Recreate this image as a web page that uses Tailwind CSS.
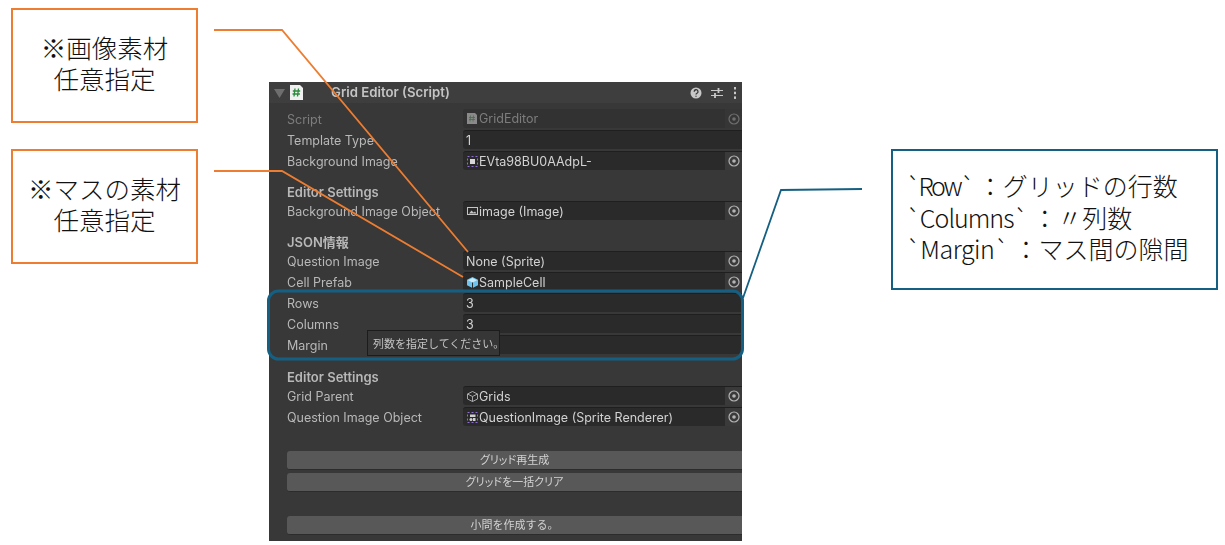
<!DOCTYPE html>
<html lang="ja">
  <head>
    <meta charset="UTF-8" />
    <meta name="viewport" content="width=device-width, initial-scale=1.0" />
    <title>Grid Editor</title>
    <script src="https://cdn.jsdelivr.net/npm/@tailwindcss/browser@4"></script>
  </head>
  <body class="bg-white overflow-hidden">
    <div class="relative w-[1225px] h-[545px] bg-white font-['Noto_Sans_CJK_JP',sans-serif] text-[#111]">

      <!-- Callouts -->
      <div class="absolute left-[11px] top-[8px] w-[187px] h-[115px] border-2 border-[#ed7d31] flex items-center justify-center text-center text-[25.500px] leading-[31px] font-light">
        <p class="mb-[7px]">※画像素材<br />任意指定</p>
      </div>
      <div class="absolute left-[11px] top-[149px] w-[187px] h-[115px] border-2 border-[#ed7d31] flex items-center justify-center text-center text-[25.500px] leading-[31px] font-light">
        <p class="mb-[7px]">※マスの素材<br />任意指定</p>
      </div>
      <div class="absolute left-[891px] top-[149px] w-[327px] h-[141px] border-2 border-[#156082] flex items-center pl-[13px] text-[25px] leading-[31.5px] font-light whitespace-nowrap">
        <p class="mb-[4px]"><span class="tracking-[-2.4px]">`Row`</span>&#8201;：グリッドの行数<br /><span class="tracking-[-1px]">`Columns`</span>&#8201;：〃列数<br /><span class="tracking-[-0.5px]">`Margin`</span>&#8201;：マス間の隙間</p>
      </div>

      <!-- Inspector -->
      <div class="absolute left-[269px] top-[82px] w-[473px] h-[459px] overflow-hidden blur-[0.35px] bg-[#383838] font-['Inter','Noto_Sans_CJK_JP',sans-serif] text-[12.5px] leading-[21px] text-[#b8b8b8]">
        <div class="h-[21px] bg-[#3e3e3e] flex items-center pl-[5px] pr-[4px] text-[13.2px] font-semibold text-[#c4c4c4]">
          <svg class="w-[11px] h-[10px]" viewBox="0 0 11 10"><path d="M0 1h11L5.500 10z" fill="#6e6e6e" /></svg>
          <svg class="w-[13px] h-[15px] ml-[5px]" viewBox="0 0 13 15">
            <path d="M0 0h10l3 3v12H0z" fill="#f0f0f0" />
            <path d="M5 3.500 4 11.500M8.500 3.500l-1 8M2.800 6h7.400M2.500 9h7.400" stroke="#2c8a3c" stroke-width="1.300" fill="none" />
          </svg>
          <span class="ml-[28px] flex-1">Grid Editor (Script)</span>
          <svg class="w-[12px] h-[12px] mr-[9px]" viewBox="0 0 12 12">
            <circle cx="6" cy="6" r="5.500" fill="#c8c8c8" />
            <path d="M4.200 4.700a1.900 1.900 0 1 1 2.800 1.600c-.7.400-1 .7-1 1.300M6 8.700v1.100" stroke="#383838" stroke-width="1.300" fill="none" />
          </svg>
          <svg class="w-[12px] h-[12px] mr-[10px]" viewBox="0 0 12 12">
            <path d="M0 3.500h12M0 8.500h12" stroke="#c8c8c8" stroke-width="1" />
            <path d="M7.500 1v5M4 6v5" stroke="#c8c8c8" stroke-width="1.800" />
          </svg>
          <svg class="w-[4px] h-[12px] mr-[1px]" viewBox="0 0 4 12" fill="#c8c8c8">
            <rect x="1" y="0" width="2" height="2.500" /><rect x="1" y="4.700" width="2" height="2.500" /><rect x="1" y="9.400" width="2" height="2.500" />
          </svg>
        </div>

        <div class="mt-[6px] flex flex-col gap-[2px]">
          <!-- Script -->
          <div class="flex h-[19px] pl-[18px]">
            <span class="w-[176px] text-[#7d7d7d]">Script</span>
            <div class="flex-1 flex items-center rounded-l-[3px] bg-[#323232] text-[#7d7d7d] pl-[4px]">
              <svg class="w-[10px] h-[11px] mr-[2px]" viewBox="0 0 10 11"><path d="M0 0h8l2 2v9H0z" fill="#8a8a8a" /><path d="M3.500 2.500 3 8.500M6.500 2.500 6 8.500M2 4.500h6M2 6.500h6" stroke="#4c6a50" stroke-width=".8" /></svg>
              <span class="flex-1">GridEditor</span>
              <div class="w-[17px] h-full flex items-center justify-center bg-[#363636]">
                <svg class="w-[12px] h-[12px]" viewBox="0 0 12 12"><circle cx="6" cy="6" r="5" fill="none" stroke="#6e6e6e" stroke-width="1.200" /><circle cx="6" cy="6" r="1.800" fill="#6e6e6e" /></svg>
              </div>
            </div>
          </div>
          <!-- Template Type -->
          <div class="flex h-[19px] pl-[18px]">
            <span class="w-[176px]">Template Type</span>
            <div class="flex-1 flex items-center rounded-l-[3px] bg-[#2a2a2a] border-t border-[#1f1f1f] pl-[3px] text-[#d2d2d2]">1</div>
          </div>
          <!-- Background Image -->
          <div class="flex h-[19px] pl-[18px]">
            <span class="w-[176px]">Background Image</span>
            <div class="flex-1 flex items-center rounded-l-[3px] bg-[#2a2a2a] border-t border-[#1f1f1f] pl-[4px] text-[#d2d2d2]">
              <svg class="w-[11px] h-[11px] mr-[1px]" viewBox="0 0 11 11"><rect x=".5" y=".5" width="10" height="10" fill="none" stroke="#8a6fd0" stroke-width="1" stroke-dasharray="2 2" /><rect x="3" y="3" width="5" height="5" fill="#d8d8d8" /></svg>
              <span class="flex-1">EVta98BU0AAdpL-</span>
              <div class="w-[17px] h-full flex items-center justify-center bg-[#3a3a3a]">
                <svg class="w-[12px] h-[12px]" viewBox="0 0 12 12"><circle cx="6" cy="6" r="5" fill="none" stroke="#b4b4b4" stroke-width="1.200" /><circle cx="6" cy="6" r="1.800" fill="#b4b4b4" /></svg>
              </div>
            </div>
          </div>

          <div class="mt-[10px] mb-[-2px] h-[19px] pl-[18px] text-[13px] font-semibold">Editor Settings</div>
          <div class="flex h-[19px] pl-[18px]">
            <span class="w-[176px]">Background Image Object</span>
            <div class="flex-1 flex items-center rounded-l-[3px] bg-[#2a2a2a] border-t border-[#1f1f1f] pl-[4px] text-[#d2d2d2]">
              <svg class="w-[11px] h-[10px] mr-[1px]" viewBox="0 0 11 10"><rect x=".5" y="1.500" width="10" height="7" fill="none" stroke="#c4c4c4" /><path d="M2 7.500 4.500 4.500 6.500 6.500 8 5.500 9.500 7.500z" fill="#c4c4c4" /></svg>
              <span class="flex-1">image (Image)</span>
              <div class="w-[17px] h-full flex items-center justify-center bg-[#3a3a3a]">
                <svg class="w-[12px] h-[12px]" viewBox="0 0 12 12"><circle cx="6" cy="6" r="5" fill="none" stroke="#b4b4b4" stroke-width="1.200" /><circle cx="6" cy="6" r="1.800" fill="#b4b4b4" /></svg>
              </div>
            </div>
          </div>

          <div class="mt-[10px] mb-[-2px] h-[19px] pl-[18px] text-[13px] font-semibold">JSON情報</div>
          <div class="flex h-[19px] pl-[18px]">
            <span class="w-[176px]">Question Image</span>
            <div class="flex-1 flex items-center rounded-l-[3px] bg-[#2a2a2a] border-t border-[#1f1f1f] pl-[3px] text-[#d2d2d2]">
              <span class="flex-1">None (Sprite)</span>
              <div class="w-[17px] h-full flex items-center justify-center bg-[#3a3a3a]">
                <svg class="w-[12px] h-[12px]" viewBox="0 0 12 12"><circle cx="6" cy="6" r="5" fill="none" stroke="#b4b4b4" stroke-width="1.200" /><circle cx="6" cy="6" r="1.800" fill="#b4b4b4" /></svg>
              </div>
            </div>
          </div>
          <div class="flex h-[19px] pl-[18px]">
            <span class="w-[176px]">Cell Prefab</span>
            <div class="flex-1 flex items-center rounded-l-[3px] bg-[#2a2a2a] border-t border-[#1f1f1f] pl-[4px] text-[#d2d2d2]">
              <svg class="w-[11px] h-[11px] mr-[1px]" viewBox="0 0 11 11"><path d="M5.500 0 11 2.700v5.600L5.500 11 0 8.300V2.700z" fill="#6fc4ee" /><path d="M1 3.200 5.500 5.500 10 3.200 5.500 1z" fill="#cdeaf8" /><path d="M5.500 5.500V11" stroke="#2a2a2a" /></svg>
              <span class="flex-1">SampleCell</span>
              <div class="w-[17px] h-full flex items-center justify-center bg-[#3a3a3a]">
                <svg class="w-[12px] h-[12px]" viewBox="0 0 12 12"><circle cx="6" cy="6" r="5" fill="none" stroke="#b4b4b4" stroke-width="1.200" /><circle cx="6" cy="6" r="1.800" fill="#b4b4b4" /></svg>
              </div>
            </div>
          </div>
          <div class="flex h-[19px] pl-[18px]">
            <span class="w-[176px]">Rows</span>
            <div class="flex-1 flex items-center rounded-l-[3px] bg-[#2a2a2a] border-t border-[#1f1f1f] pl-[3px] pt-[1px] text-[#d2d2d2]">3</div>
          </div>
          <div class="flex h-[19px] pl-[18px]">
            <span class="w-[176px]">Columns</span>
            <div class="flex-1 flex items-center rounded-l-[3px] bg-[#2a2a2a] border-t border-[#1f1f1f] pl-[3px] pt-[1px] text-[#d2d2d2]">3</div>
          </div>
          <div class="flex h-[19px] pl-[18px]">
            <span class="w-[176px]">Margin</span>
            <div class="flex-1 flex items-center rounded-l-[3px] bg-[#2a2a2a] border-t border-[#1f1f1f] pl-[3px] text-[#d2d2d2]"></div>
          </div>

          <div class="mt-[11px] mb-[-2px] h-[19px] pl-[18px] text-[13px] font-semibold">Editor Settings</div>
          <div class="flex h-[19px] pl-[18px]">
            <span class="w-[176px]">Grid Parent</span>
            <div class="flex-1 flex items-center rounded-l-[3px] bg-[#2a2a2a] border-t border-[#1f1f1f] pl-[4px] text-[#d2d2d2]">
              <svg class="w-[11px] h-[11px] mr-[1px]" viewBox="0 0 11 11" fill="none" stroke="#b4b4b4" stroke-width=".9"><path d="M5.500 .5 10.500 3v5l-5 2.500-5-2.500V3zM.5 3l5 2.500L10.500 3M5.500 5.500v5" /></svg>
              <span class="flex-1">Grids</span>
              <div class="w-[17px] h-full flex items-center justify-center bg-[#3a3a3a]">
                <svg class="w-[12px] h-[12px]" viewBox="0 0 12 12"><circle cx="6" cy="6" r="5" fill="none" stroke="#b4b4b4" stroke-width="1.200" /><circle cx="6" cy="6" r="1.800" fill="#b4b4b4" /></svg>
              </div>
            </div>
          </div>
          <div class="flex h-[19px] pl-[18px]">
            <span class="w-[176px]">Question Image Object</span>
            <div class="flex-1 flex items-center rounded-l-[3px] bg-[#2a2a2a] border-t border-[#1f1f1f] pl-[4px] text-[#d2d2d2]">
              <svg class="w-[11px] h-[11px] mr-[1px]" viewBox="0 0 11 11"><rect x=".5" y=".5" width="10" height="10" fill="none" stroke="#8a6fd0" stroke-dasharray="2 2" /><rect x="3" y="2.500" width="5.500" height="2.500" fill="#d0d0d0" /><circle cx="4" cy="7.500" r="1.500" fill="#d0d0d0" /><rect x="6" y="6" width="2.500" height="3" fill="#d0d0d0" /></svg>
              <span class="flex-1">QuestionImage (Sprite Renderer)</span>
              <div class="w-[17px] h-full flex items-center justify-center bg-[#3a3a3a]">
                <svg class="w-[12px] h-[12px]" viewBox="0 0 12 12"><circle cx="6" cy="6" r="5" fill="none" stroke="#b4b4b4" stroke-width="1.200" /><circle cx="6" cy="6" r="1.800" fill="#b4b4b4" /></svg>
              </div>
            </div>
          </div>

          <!-- Buttons -->
          <div class="mt-[23px] ml-[18px] h-[19px] rounded-l-[3px] bg-[#585858] border-b border-[#2c2c2c] text-center text-[11px] leading-[18px] text-[#d2d2d2] [font-feature-settings:'palt']">グリッド再生成</div>
          <div class="mt-[1px] ml-[18px] h-[19px] rounded-l-[3px] bg-[#585858] border-b border-[#2c2c2c] text-center text-[11px] leading-[18px] text-[#d2d2d2] [font-feature-settings:'palt']">グリッドを一括クリア</div>
          <div class="mt-[22px] ml-[18px] h-[19px] rounded-l-[3px] bg-[#585858] border-b border-[#2c2c2c] text-center text-[11px] leading-[18px] text-[#d2d2d2]">小問を作成する。</div>
        </div>
      </div>

      <!-- Tooltip -->
      <div class="absolute left-[367px] top-[330px] w-[133px] h-[26px] blur-[0.35px] bg-[#363636] border border-[#1c1c1c] pl-[5px] text-[11px] leading-[24px] text-[#c4c4c4] whitespace-nowrap font-['Noto_Sans_CJK_JP',sans-serif]">列数を指定してください。</div>

      <!-- Leader lines and highlight -->
      <svg class="absolute inset-0 w-[1225px] h-[545px] pointer-events-none" viewBox="0 0 1225 545" fill="none">
        <path d="M214 30H282L468 252" stroke="#ed7d31" stroke-width="1.800" />
        <path d="M214 171H282L463 277" stroke="#ed7d31" stroke-width="1.800" />
        <path d="M862 189 781 190 743 298" stroke="#156082" stroke-width="1.800" />
        <rect x="268.500" y="291" width="474" height="68" rx="10" stroke="#156082" stroke-width="3" />
      </svg>
    </div>
  </body>
</html>
